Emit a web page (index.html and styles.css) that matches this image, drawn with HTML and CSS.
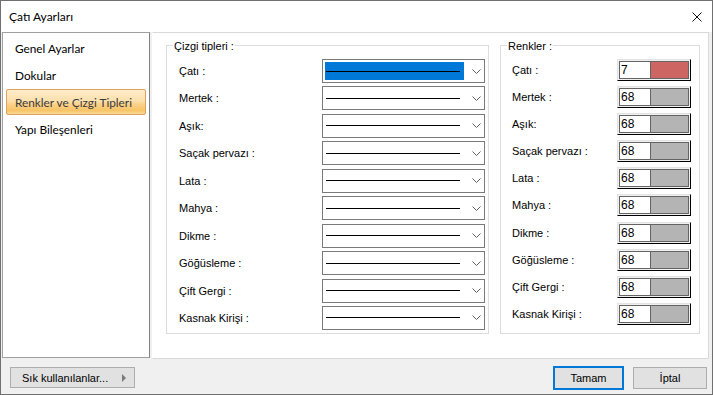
FILE: index.html
```html
<!DOCTYPE html>
<html lang="tr">

<head>
    <meta charset="UTF-8">
    <meta name="viewport" content="width=device-width, initial-scale=1.0">
    <title>Çatı Ayarları</title>
    <link rel="stylesheet" href="styles.css">
</head>

<body>
    <div class="window">
        <div class="titlebar">
            <span class="title">Çatı Ayarları</span>
            <svg class="close" width="10" height="10" viewBox="0 0 10 10">
                <path d="M0.5 0.5 L9.5 9.5 M9.5 0.5 L0.5 9.5" stroke="#111" stroke-width="1" fill="none" />
            </svg>
        </div>

        <div class="main">
            <ul class="nav">
                <li>Genel Ayarlar</li>
                <li>Dokular</li>
                <li class="active">Renkler ve Çizgi Tipleri</li>
                <li>Yapı Bileşenleri</li>
            </ul>

            <div class="panel">
                <div class="group lines">
                    <span class="legend">Çizgi tipleri :</span>
                    <div class="row">
                        <span class="lbl">Çatı :</span>
                        <div class="combo"><span class="combo-val sel"><i class="stroke"></i></span><svg class="chev" width="9" height="5" viewBox="0 0 9 5"><path d="M0.5 0.5 L4.5 4.5 L8.5 0.5" stroke="#606060" fill="none" /></svg></div>
                    </div>
                    <div class="row">
                        <span class="lbl">Mertek :</span>
                        <div class="combo"><span class="combo-val"><i class="stroke"></i></span><svg class="chev" width="9" height="5" viewBox="0 0 9 5"><path d="M0.5 0.5 L4.5 4.5 L8.5 0.5" stroke="#606060" fill="none" /></svg></div>
                    </div>
                    <div class="row">
                        <span class="lbl">Aşık:</span>
                        <div class="combo"><span class="combo-val"><i class="stroke"></i></span><svg class="chev" width="9" height="5" viewBox="0 0 9 5"><path d="M0.5 0.5 L4.5 4.5 L8.5 0.5" stroke="#606060" fill="none" /></svg></div>
                    </div>
                    <div class="row">
                        <span class="lbl">Saçak pervazı :</span>
                        <div class="combo"><span class="combo-val"><i class="stroke"></i></span><svg class="chev" width="9" height="5" viewBox="0 0 9 5"><path d="M0.5 0.5 L4.5 4.5 L8.5 0.5" stroke="#606060" fill="none" /></svg></div>
                    </div>
                    <div class="row">
                        <span class="lbl">Lata :</span>
                        <div class="combo"><span class="combo-val"><i class="stroke"></i></span><svg class="chev" width="9" height="5" viewBox="0 0 9 5"><path d="M0.5 0.5 L4.5 4.5 L8.5 0.5" stroke="#606060" fill="none" /></svg></div>
                    </div>
                    <div class="row">
                        <span class="lbl">Mahya :</span>
                        <div class="combo"><span class="combo-val"><i class="stroke"></i></span><svg class="chev" width="9" height="5" viewBox="0 0 9 5"><path d="M0.5 0.5 L4.5 4.5 L8.5 0.5" stroke="#606060" fill="none" /></svg></div>
                    </div>
                    <div class="row">
                        <span class="lbl">Dikme :</span>
                        <div class="combo"><span class="combo-val"><i class="stroke"></i></span><svg class="chev" width="9" height="5" viewBox="0 0 9 5"><path d="M0.5 0.5 L4.5 4.5 L8.5 0.5" stroke="#606060" fill="none" /></svg></div>
                    </div>
                    <div class="row">
                        <span class="lbl">Göğüsleme :</span>
                        <div class="combo"><span class="combo-val"><i class="stroke"></i></span><svg class="chev" width="9" height="5" viewBox="0 0 9 5"><path d="M0.5 0.5 L4.5 4.5 L8.5 0.5" stroke="#606060" fill="none" /></svg></div>
                    </div>
                    <div class="row">
                        <span class="lbl">Çift Gergi :</span>
                        <div class="combo"><span class="combo-val"><i class="stroke"></i></span><svg class="chev" width="9" height="5" viewBox="0 0 9 5"><path d="M0.5 0.5 L4.5 4.5 L8.5 0.5" stroke="#606060" fill="none" /></svg></div>
                    </div>
                    <div class="row">
                        <span class="lbl">Kasnak Kirişi :</span>
                        <div class="combo"><span class="combo-val"><i class="stroke"></i></span><svg class="chev" width="9" height="5" viewBox="0 0 9 5"><path d="M0.5 0.5 L4.5 4.5 L8.5 0.5" stroke="#606060" fill="none" /></svg></div>
                    </div>
                </div>

                <div class="group colors">
                    <span class="legend">Renkler :</span>
                    <div class="row">
                        <span class="lbl">Çatı :</span>
                        <div class="clr"><div class="clr-in"><span class="clr-num">7</span><span class="clr-fill red"></span></div></div>
                    </div>
                    <div class="row">
                        <span class="lbl">Mertek :</span>
                        <div class="clr"><div class="clr-in"><span class="clr-num">68</span><span class="clr-fill"></span></div></div>
                    </div>
                    <div class="row">
                        <span class="lbl">Aşık:</span>
                        <div class="clr"><div class="clr-in"><span class="clr-num">68</span><span class="clr-fill"></span></div></div>
                    </div>
                    <div class="row">
                        <span class="lbl">Saçak pervazı :</span>
                        <div class="clr"><div class="clr-in"><span class="clr-num">68</span><span class="clr-fill"></span></div></div>
                    </div>
                    <div class="row">
                        <span class="lbl">Lata :</span>
                        <div class="clr"><div class="clr-in"><span class="clr-num">68</span><span class="clr-fill"></span></div></div>
                    </div>
                    <div class="row">
                        <span class="lbl">Mahya :</span>
                        <div class="clr"><div class="clr-in"><span class="clr-num">68</span><span class="clr-fill"></span></div></div>
                    </div>
                    <div class="row">
                        <span class="lbl">Dikme :</span>
                        <div class="clr"><div class="clr-in"><span class="clr-num">68</span><span class="clr-fill"></span></div></div>
                    </div>
                    <div class="row">
                        <span class="lbl">Göğüsleme :</span>
                        <div class="clr"><div class="clr-in"><span class="clr-num">68</span><span class="clr-fill"></span></div></div>
                    </div>
                    <div class="row">
                        <span class="lbl">Çift Gergi :</span>
                        <div class="clr"><div class="clr-in"><span class="clr-num">68</span><span class="clr-fill"></span></div></div>
                    </div>
                    <div class="row">
                        <span class="lbl">Kasnak Kirişi :</span>
                        <div class="clr"><div class="clr-in"><span class="clr-num">68</span><span class="clr-fill"></span></div></div>
                    </div>
                </div>
            </div>
        </div>

        <div class="bottombar">
            <button class="btn btn-more">Sık kullanılanlar... <span class="arrow"></span></button>
            <button class="btn btn-ok">Tamam</button>
            <button class="btn btn-cancel">İptal</button>
        </div>
    </div>
</body>

</html>
```

FILE: styles.css
```css
body {
    margin: 0;
    width: 713px;
    height: 395px;
    overflow: hidden;
    font-family: "Liberation Sans", Arial, sans-serif;
    font-size: 11px;
    color: #000;
}

.window {
    box-sizing: border-box;
    width: 713px;
    height: 395px;
    border: 1px solid #707070;
    background-color: #f0f0f0;
    display: flex;
    flex-direction: column;
}

.titlebar {
    height: 31px;
    flex: none;
    background-color: #fff;
    display: flex;
    align-items: center;
    justify-content: space-between;
    padding: 0 10px 0 8px;
}

.title {
    font-family: Lato, "Noto Sans", sans-serif;
    font-size: 12px;
}

.close {
    display: block;
}

.main {
    height: 327px;
    flex: none;
    display: flex;
    align-items: flex-start;
    gap: 2px;
    padding-left: 1px;
}

/* left list */
.nav {
    box-sizing: border-box;
    width: 148px;
    height: 326px;
    margin: 0;
    padding: 2px 3px;
    list-style-type: none;
    background-color: #fff;
    border: 1px solid #a0a0a0;
    border-right-color: #828282;
}

.nav li {
    box-sizing: border-box;
    height: 26px;
    margin-bottom: 1px;
    padding-left: 8px;
    line-height: 25px;
    border: 1px solid transparent;
    font-family: Lato, "Noto Sans", sans-serif;
    font-size: 11.8px;
}

.nav li.active {
    border-color: #dba35c;
    border-radius: 2px;
    color: #3a3a3a;
    background: linear-gradient(#fdeccb 0%, #fce0ad 45%, #fad08a 60%, #f8c466 85%, #fbd99a 100%);
}

/* right panel */
.panel {
    box-sizing: border-box;
    width: 557px;
    height: 327px;
    background-color: #fff;
    border: 1px solid #d9d9d9;
    border-left-color: #fff;
    display: flex;
    align-items: flex-start;
    gap: 11px;
    padding: 12px 0 0 13px;
}

.group {
    position: relative;
    box-sizing: border-box;
    height: 289px;
    border: 1px solid #dcdcdc;
    display: flex;
    flex-direction: column;
}

.legend {
    position: absolute;
    top: -7px;
    left: 6px;
    padding: 0 1px;
    line-height: 14px;
    background-color: #fff;
}

.lines {
    width: 323px;
    padding: 13px 3px 0 12px;
    gap: 3.44px;
}

.colors {
    width: 200px;
    padding: 13px 8px 0 11px;
    gap: 5.1px;
}

.row {
    display: flex;
    align-items: center;
    justify-content: space-between;
}

.lbl {
    white-space: nowrap;
}

/* line type combo */
.combo {
    box-sizing: border-box;
    width: 163px;
    height: 24px;
    border: 1px solid #7a7a7a;
    background-color: #fff;
    display: flex;
    align-items: center;
    padding: 0 2px;
}

.combo-val {
    box-sizing: border-box;
    width: 139px;
    height: 18px;
    padding: 0 4px 0 1px;
    display: flex;
    align-items: center;
}

.combo-val.sel {
    background-color: #0078d7;
}

.stroke {
    flex: 1;
    height: 1px;
    background-color: #000;
}

.chev {
    display: block;
    margin-left: 8px;
}

/* colour picker */
.clr {
    box-sizing: border-box;
    width: 74px;
    height: 22px;
    padding: 1px;
    background-color: #f0f0f0;
    border: 1px solid #e3e3e3;
    border-right-color: #000;
    border-bottom-color: #000;
}

.clr-in {
    box-sizing: border-box;
    height: 100%;
    border: 1px solid #646464;
    display: flex;
}

.clr-num {
    box-sizing: border-box;
    width: 31px;
    padding-left: 1px;
    line-height: 16px;
    background-color: #fff;
    border-right: 1px solid #646464;
    font-size: 12px;
}

.clr-fill {
    flex: 1;
    background-color: #b4b4b4;
}

.clr-fill.red {
    background-color: #cd6663;
}

/* bottom buttons */
.bottombar {
    flex: 1;
    display: flex;
    align-items: center;
    padding: 2px 5px 0 9px;
}

.btn {
    box-sizing: border-box;
    margin: 0;
    height: 22px;
    border: 1px solid #adadad;
    background-color: #e1e1e1;
    font-family: "Liberation Sans", Arial, sans-serif;
    font-size: 11px;
    color: #000;
    padding: 0;
}

.btn-more {
    width: 125px;
    height: 21px;
    padding-left: 11px;
    text-align: left;
    display: flex;
    align-items: center;
    justify-content: space-between;
    padding-right: 8px;
    margin-right: auto;
}

.arrow {
    width: 0;
    height: 0;
    border-top: 4px solid transparent;
    border-bottom: 4px solid transparent;
    border-left: 4px solid #7a7a7a;
}

.btn-ok {
    width: 71px;
    height: 24px;
    border: 2px solid #0078d7;
}

.btn-cancel {
    width: 74px;
    margin-left: 9px;
}
```
